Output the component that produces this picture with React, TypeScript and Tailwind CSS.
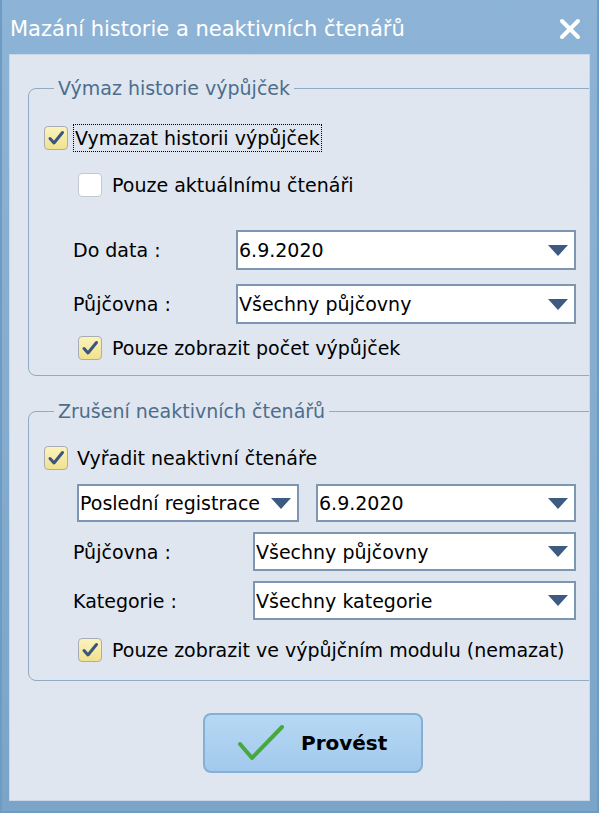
import React from "react";

const Arrow = () => (
  <svg width="20" height="11" viewBox="0 0 20 11" className="shrink-0">
    <path d="M0 0 H20 L10 11 Z" fill="#3d5b80" />
  </svg>
);

const Check = ({ checked }: { checked: boolean }) => (
  <div
    className={
      checked
        ? "w-[24px] h-[24px] shrink-0 rounded-[4px] border border-[#a7adb3] bg-gradient-to-b from-[#fbf3bd] to-[#f1e18e] flex items-center justify-center"
        : "w-[24px] h-[24px] shrink-0 rounded-[4px] border border-[#c3c9cf] bg-white"
    }
  >
    {checked && (
      <svg width="18" height="16" viewBox="0 0 18 16">
        <path d="M3 8.5 L7 13 L15.5 2.5" fill="none" stroke="#3a557f" strokeWidth="3" strokeLinecap="round" strokeLinejoin="round" />
      </svg>
    )}
  </div>
);

const Select = ({ text, w, h }: { text: string; w: string; h: string }) => (
  <div className={`${w} ${h} bg-white border-2 border-[#7d96b2] flex items-center justify-between pl-[1px] pr-[6px]`}>
    <span className="whitespace-nowrap leading-[24px]">{text}</span>
    <Arrow />
  </div>
);

export default function App() {
  return (
    <div className="w-[601px] h-[816px] bg-white font-['DejaVu_Sans',sans-serif] text-[19px] leading-[24px] text-black">
      <div className="w-[599px] h-[813px] bg-gradient-to-b from-[#8db4d6] to-[#7aa5c9] flex flex-col border-l-2 border-r-2 border-b-2 border-[#6f9bc2]">
        <div className="h-[54px] shrink-0 flex items-center justify-between pl-[8px] pr-[16px] pt-[4px]">
          <span className="text-white text-[21px] whitespace-nowrap">Mazání historie a neaktivních čtenářů</span>
          <svg width="22" height="22" viewBox="0 0 22 22">
            <path d="M3 3 L19 19 M19 3 L3 19" stroke="white" strokeWidth="4" strokeLinecap="round" />
          </svg>
        </div>
        <div className="flex-1 mx-[7px] mb-[10px] bg-[#dfe6ef] border border-[#c8d8e8] overflow-hidden">
          <fieldset className="ml-[18px] mt-[21px] -mr-[4px] border border-[#8fabc6] rounded-l-[8px] pb-[15px] pr-[16px]">
            <legend className="ml-[25px] px-[4px] text-[#4d6d8d] leading-[24px]">Výmaz historie výpůjček</legend>
            <div className="mt-[24px] h-[28px] flex items-center pl-[15px]">
              <Check checked />
              <span className="ml-[5px] h-[28px] border border-dotted border-black flex items-center px-[1px] whitespace-nowrap">Vymazat historii výpůjček</span>
            </div>
            <div className="mt-[21px] h-[24px] flex items-center pl-[49px]">
              <Check checked={false} />
              <span className="ml-[10px]">Pouze aktuálnímu čtenáři</span>
            </div>
            <div className="mt-[33px] flex items-center pl-[44px]">
              <span className="w-[163px] shrink-0">Do data :</span>
              <Select text="6.9.2020" w="flex-1" h="h-[40px]" />
            </div>
            <div className="mt-[14px] flex items-center pl-[44px]">
              <span className="w-[163px] shrink-0">Půjčovna :</span>
              <Select text="Všechny půjčovny" w="flex-1" h="h-[40px]" />
            </div>
            <div className="mt-[12px] h-[24px] flex items-center pl-[49px]">
              <Check checked />
              <span className="ml-[10px]">Pouze zobrazit počet výpůjček</span>
            </div>
          </fieldset>
          <fieldset className="ml-[18px] mt-[23px] -mr-[4px] border border-[#8fabc6] rounded-l-[8px] pb-[18px] pr-[16px]">
            <legend className="ml-[25px] px-[4px] text-[#4d6d8d] leading-[24px]">Zrušení neaktivních čtenářů</legend>
            <div className="mt-[23px] h-[24px] flex items-center pl-[15px]">
              <Check checked />
              <span className="ml-[9px]">Vyřadit neaktivní čtenáře</span>
            </div>
            <div className="mt-[14px] flex items-center pl-[48px] gap-[17px]">
              <Select text="Poslední registrace" w="w-[222px]" h="h-[38px]" />
              <Select text="6.9.2020" w="flex-1" h="h-[38px]" />
            </div>
            <div className="mt-[10px] flex items-center pl-[44px]">
              <span className="w-[180px] shrink-0">Půjčovna :</span>
              <Select text="Všechny půjčovny" w="flex-1" h="h-[39px]" />
            </div>
            <div className="mt-[10px] flex items-center pl-[44px]">
              <span className="w-[180px] shrink-0">Kategorie :</span>
              <Select text="Všechny kategorie" w="flex-1" h="h-[39px]" />
            </div>
            <div className="mt-[18px] h-[24px] flex items-center pl-[49px]">
              <Check checked />
              <span className="ml-[10px] whitespace-nowrap">Pouze zobrazit ve výpůjčním modulu (nemazat)</span>
            </div>
          </fieldset>
          <div className="mt-[32px] pl-[193px]">
            <button className="w-[220px] h-[60px] rounded-[8px] border-2 border-[#86afd4] bg-gradient-to-b from-[#b6d8f4] to-[#a2c9ec] flex items-center pl-[33px]">
              <svg width="46" height="36" viewBox="0 0 46 36" className="shrink-0">
                <path d="M2 19 L14 33 L44 2" fill="none" stroke="#47a83f" strokeWidth="4" strokeLinecap="round" strokeLinejoin="round" />
              </svg>
              <span className="ml-[17px] font-bold text-[20px]">Provést</span>
            </button>
          </div>
        </div>
      </div>
    </div>
  );
}
